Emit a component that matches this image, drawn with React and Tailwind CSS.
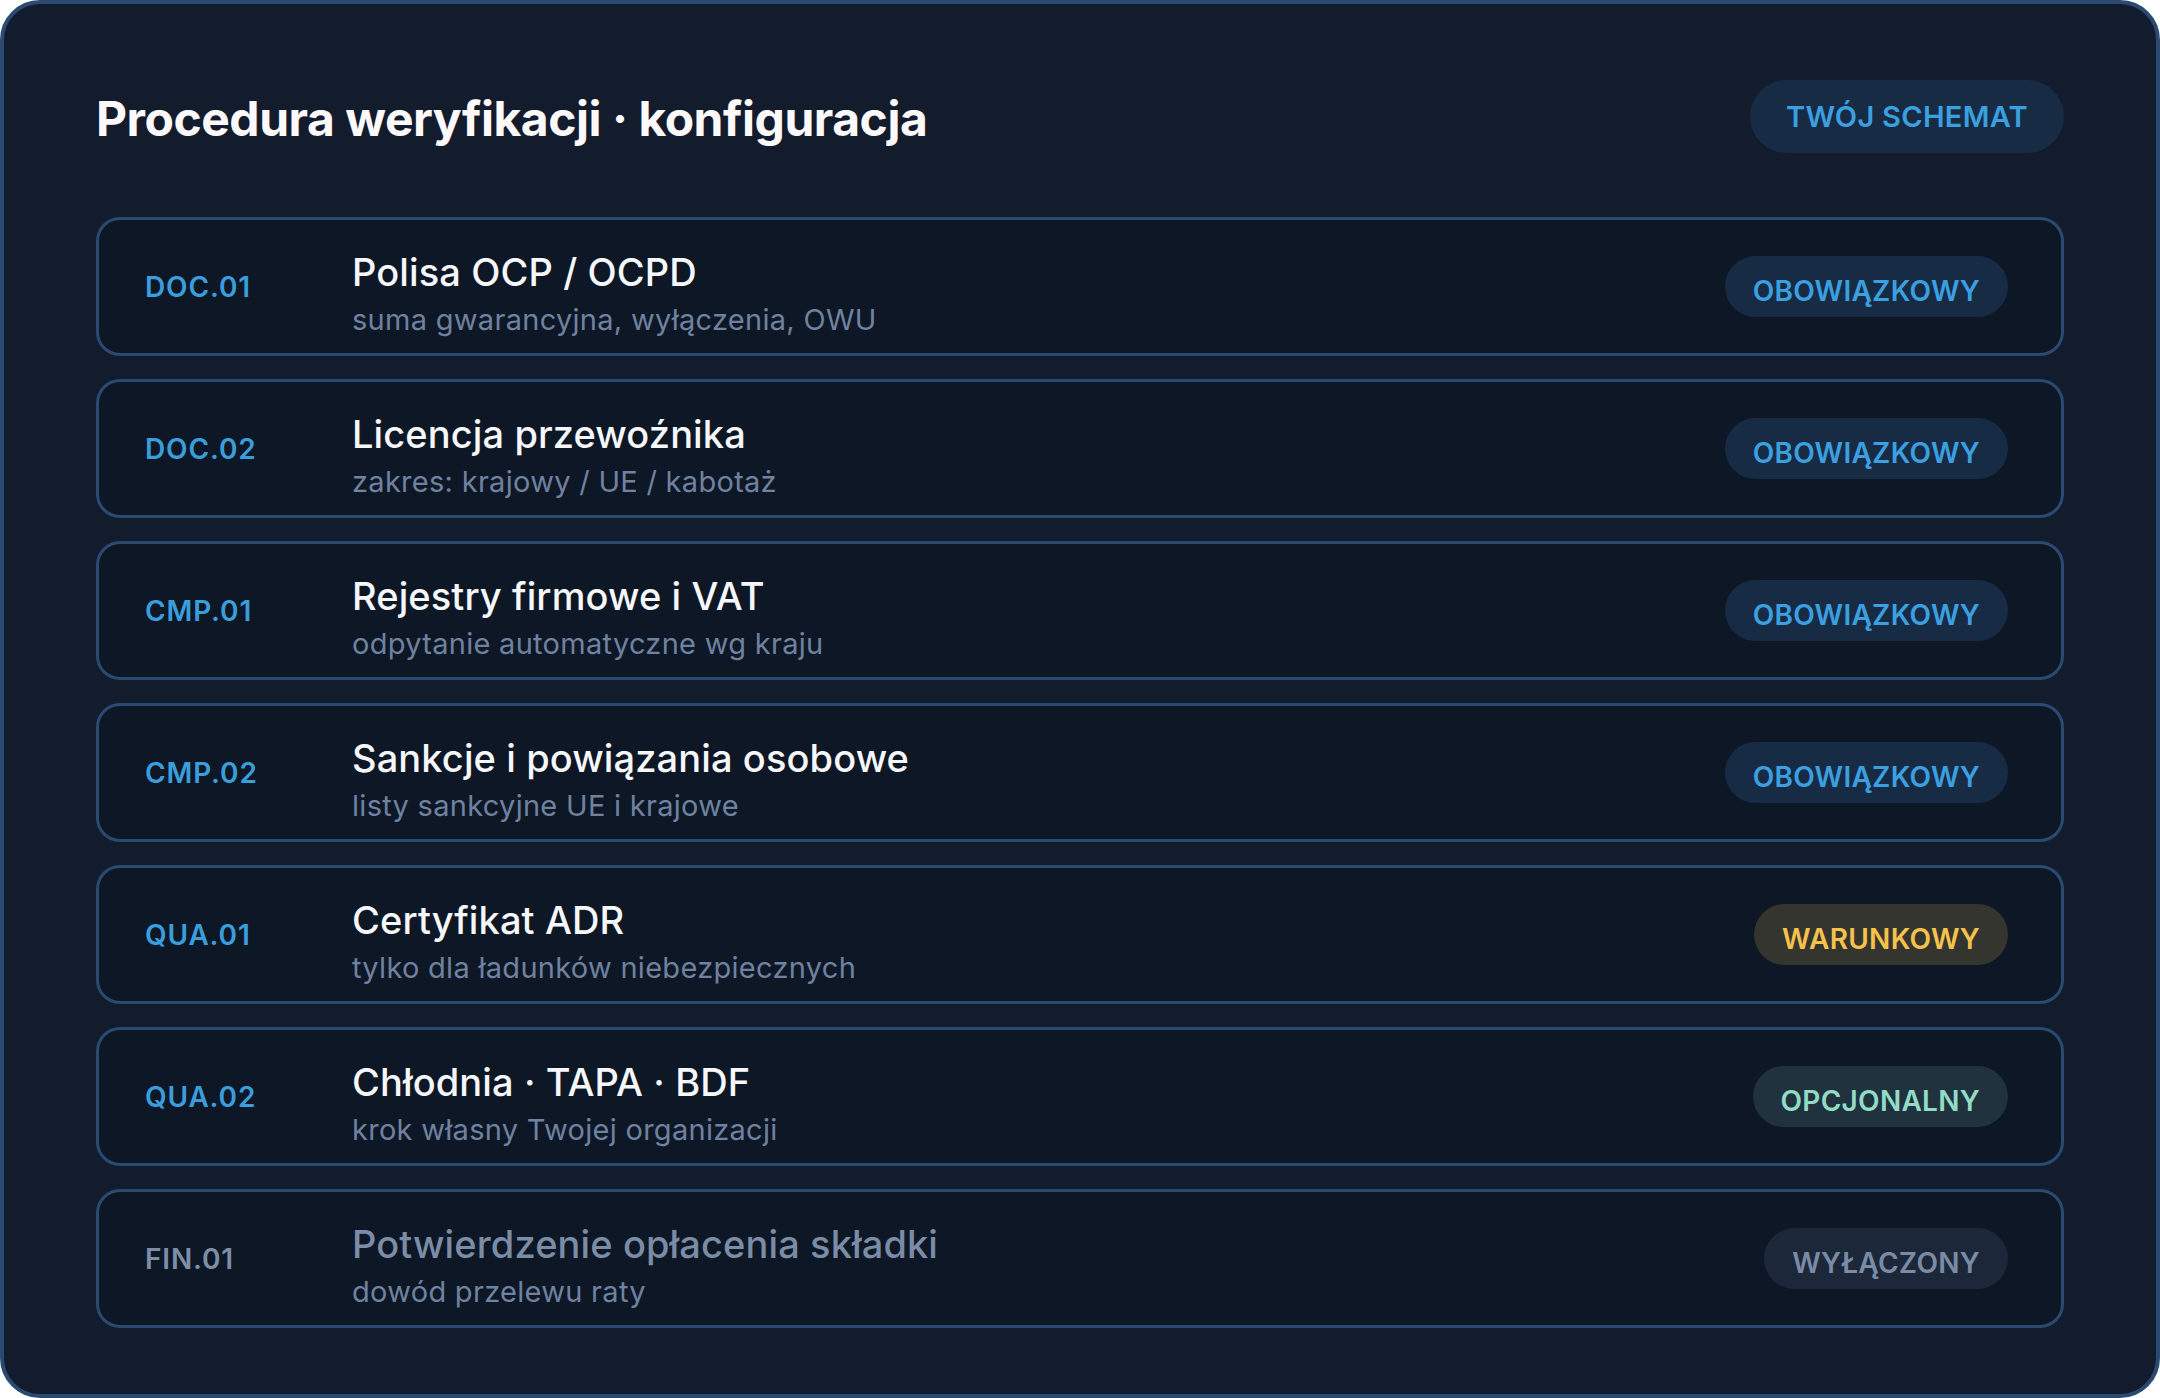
const steps = [
  {
    code: "DOC.01",
    title: "Polisa OCP / OCPD",
    note: "suma gwarancyjna, wyłączenia, OWU",
    status: "required",
  },
  {
    code: "DOC.02",
    title: "Licencja przewoźnika",
    note: "zakres: krajowy / UE / kabotaż",
    status: "required",
  },
  {
    code: "CMP.01",
    title: "Rejestry firmowe i VAT",
    note: "odpytanie automatyczne wg kraju",
    status: "required",
  },
  {
    code: "CMP.02",
    title: "Sankcje i powiązania osobowe",
    note: "listy sankcyjne UE i krajowe",
    status: "required",
  },
  {
    code: "QUA.01",
    title: "Certyfikat ADR",
    note: "tylko dla ładunków niebezpiecznych",
    status: "conditional",
  },
  {
    code: "QUA.02",
    title: "Chłodnia · TAPA · BDF",
    note: "krok własny Twojej organizacji",
    status: "optional",
  },
  {
    code: "FIN.01",
    title: "Potwierdzenie opłacenia składki",
    note: "dowód przelewu raty",
    status: "off",
  },
];

const badges = {
  required: { label: "OBOWIĄZKOWY", cls: "bg-[#172c44] text-[#3b9fe0]" },
  conditional: { label: "WARUNKOWY", cls: "bg-[#34352f] text-[#f6c24c]" },
  optional: { label: "OPCJONALNY", cls: "bg-[#1f323e] text-[#92dcc6]" },
  off: { label: "WYŁĄCZONY", cls: "bg-[#1c2839] text-[#7a8ba6]" },
};

const StepRow = ({ step }) => {
  const badge = badges[step.status];
  const disabled = step.status === "off";

  return (
    <div className="flex h-[139px] items-center rounded-[24px] border-[3px] border-[#2b4a72] bg-[#0e1725] pl-[46px] pr-[53px]">
      <div
        className={`w-[207px] shrink-0 text-[28px] font-semibold tracking-[0.03em] ${
          disabled ? "text-[#7d8fa8]" : "text-[#3a9ddc]"
        }`}
      >
        {step.code}
      </div>
      <div className="flex min-w-0 flex-1 flex-col pt-[14px]">
        <div
          className={`text-[38px] font-medium leading-[44px] tracking-[0.003em] ${
            disabled ? "text-[#7b8ca6]" : "text-[#f6f7fa]"
          }`}
        >
          {step.title}
        </div>
        <div className="mt-[8px] text-[29px] leading-[36px] tracking-[0.01em] text-[#6f82a0]">
          {step.note}
        </div>
      </div>
      <span
        className={`flex h-[61px] shrink-0 items-center rounded-full px-[28px] pt-[8px] text-[28px] font-semibold tracking-[0.01em] ${badge.cls}`}
      >
        {badge.label}
      </span>
    </div>
  );
};

const App = () => {
  return (
    <div className="min-h-screen bg-white font-['Inter','Noto_Sans',sans-serif]">
      <div className="rounded-[40px] border-4 border-[#2b4a72] bg-[#121c2c] px-[92px] pb-[66px] pt-[76px]">
        <div className="flex h-[73px] items-center justify-between">
          <h1 className="mt-[5px] text-[48px] font-bold tracking-[-0.01em] text-[#fdf8fa]">
            Procedura weryfikacji · konfiguracja
          </h1>
          <span className="flex h-[73px] items-center rounded-full bg-[#172c44] px-[36px] text-[29px] font-semibold tracking-[0.01em] text-[#3b9fe0]">
            TWÓJ SCHEMAT
          </span>
        </div>

        <div className="mt-[64px] flex flex-col gap-[23px]">
          {steps.map((step) => (
            <StepRow key={step.code} step={step} />
          ))}
        </div>
      </div>
    </div>
  );
};

export default App;
